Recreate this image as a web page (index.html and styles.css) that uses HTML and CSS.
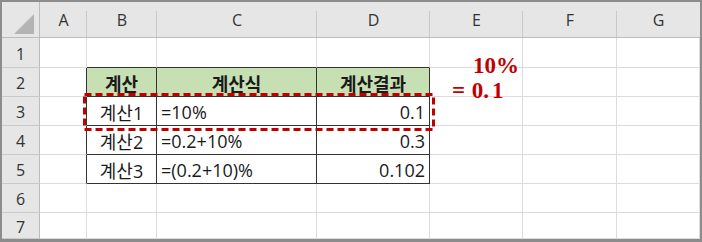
FILE: index.html
```html
<!DOCTYPE html>
<html lang="ko">
  <head>
    <meta charset="UTF-8" />
    <meta name="viewport" content="width=device-width, initial-scale=1.0" />
    <title>백분율 계산</title>
    <link rel="stylesheet" href="styles.css">
  </head>
  <body>
    <div class="sheet">
      <!-- column headers -->
      <div class="hd corner"><span class="corner-mark"></span></div>
      <div class="hd col">A</div>
      <div class="hd col">B</div>
      <div class="hd col">C</div>
      <div class="hd col">D</div>
      <div class="hd col">E</div>
      <div class="hd col">F</div>
      <div class="hd col last">G</div>

      <!-- row 1 -->
      <div class="hd row">1</div>
      <div class="cell"></div>
      <div class="cell top-edge"></div>
      <div class="cell top-edge"></div>
      <div class="cell top-edge"></div>
      <div class="cell"></div>
      <div class="cell"></div>
      <div class="cell"></div>

      <!-- row 2 -->
      <div class="hd row">2</div>
      <div class="cell left-edge"></div>
      <div class="cell tbl head">계산</div>
      <div class="cell tbl head">계산식</div>
      <div class="cell tbl head">계산결과</div>
      <div class="cell"></div>
      <div class="cell"></div>
      <div class="cell"></div>

      <!-- row 3 -->
      <div class="hd row">3</div>
      <div class="cell left-edge"></div>
      <div class="cell tbl center">계산1</div>
      <div class="cell tbl">=10%</div>
      <div class="cell tbl num">0.1</div>
      <div class="cell"></div>
      <div class="cell"></div>
      <div class="cell"></div>

      <!-- row 4 -->
      <div class="hd row">4</div>
      <div class="cell left-edge"></div>
      <div class="cell tbl center">계산2</div>
      <div class="cell tbl">=0.2+10%</div>
      <div class="cell tbl num">0.3</div>
      <div class="cell"></div>
      <div class="cell"></div>
      <div class="cell"></div>

      <!-- row 5 -->
      <div class="hd row">5</div>
      <div class="cell left-edge"></div>
      <div class="cell tbl center">계산3</div>
      <div class="cell tbl">=(0.2+10)%</div>
      <div class="cell tbl num">0.102</div>
      <div class="cell"></div>
      <div class="cell"></div>
      <div class="cell"></div>

      <!-- row 6 -->
      <div class="hd row">6</div>
      <div class="cell"></div>
      <div class="cell"></div>
      <div class="cell"></div>
      <div class="cell"></div>
      <div class="cell"></div>
      <div class="cell"></div>
      <div class="cell"></div>

      <!-- row 7 -->
      <div class="hd row">7</div>
      <div class="cell"></div>
      <div class="cell"></div>
      <div class="cell"></div>
      <div class="cell"></div>
      <div class="cell"></div>
      <div class="cell"></div>
      <div class="cell"></div>

      <!-- highlight around row 3 -->
      <svg class="highlight" width="352" height="38" viewBox="0 0 352 38">
        <rect x="1.5" y="1.5" width="349" height="35" fill="none" stroke="#c00000" stroke-width="3" stroke-dasharray="7 4" />
      </svg>

      <div class="note">
        <div class="note-top">10%</div>
        <div class="note-bottom">= 0.<span class="gap"></span>1</div>
      </div>
    </div>
  </body>
</html>
```

FILE: styles.css
```css
body {
    margin: 0;
    background-color: #fff;
}

.sheet {
    position: relative;
    width: 698px;
    height: 237px;
    border: 2px solid #8c8c8c;
    border-bottom-width: 3px;
    display: grid;
    grid-template-columns: 38px 47px 70px 160px 113px 93px 94px 83px;
    grid-template-rows: 36px 30px 29px 29px 29px 29px 29px 26px;
    overflow: hidden;
    font-family: "Open Sans", "Noto Sans CJK KR", sans-serif;
}

/* headers */
.hd {
    background-color: #e6e6e6;
    color: #333;
    font-family: "Open Sans", "Noto Sans", sans-serif;
    font-size: 16px;
    display: flex;
    align-items: center;
    justify-content: center;
    box-sizing: border-box;
}

.col {
    border-bottom: 1px solid #bcbcbc;
    position: relative;
}

.col::after {
    content: "";
    position: absolute;
    right: 0;
    top: 9px;
    bottom: 0;
    width: 1px;
    background-color: #c8c8c8;
}

.col.last::after {
    display: none;
}

.corner {
    position: relative;
    border-bottom: 1px solid #bcbcbc;
    border-right: 1px solid #bcbcbc;
}

.corner-mark {
    position: absolute;
    right: 5px;
    bottom: 3px;
    width: 0;
    height: 0;
    border-left: 20px solid transparent;
    border-bottom: 20px solid #b4b4b4;
}

.row {
    border-right: 1px solid #bcbcbc;
    border-bottom: 1px solid #cacaca;
    padding-top: 2px;
}

/* cells */
.cell {
    box-sizing: border-box;
    border-right: 1px solid #dcdcdc;
    border-bottom: 1px solid #dcdcdc;
    font-size: 18px;
    color: #1a1a1a;
    display: flex;
    align-items: center;
    padding: 1px 4px 0;
    white-space: nowrap;
}

.cell.top-edge {
    border-bottom-color: #333;
}

.cell.left-edge {
    border-right-color: #333;
}

.cell.tbl {
    border-right-color: #333;
    border-bottom-color: #333;
}

.cell.head {
    background-color: #c6e0b4;
    font-weight: bold;
    justify-content: center;
}

.cell.center {
    justify-content: center;
}

.cell.num {
    justify-content: flex-end;
}

/* overlays */
.highlight {
    position: absolute;
    left: 81px;
    top: 91px;
}

.note {
    position: absolute;
    left: 450px;
    top: 51px;
    color: #c00000;
    font-family: "Liberation Serif", serif;
    font-weight: bold;
    font-size: 23px;
    line-height: 25px;
}

.note-top {
    padding-left: 21px;
}

.note-bottom {
    word-spacing: 1px;
}

.note .gap {
    display: inline-block;
    width: 3px;
}
```
